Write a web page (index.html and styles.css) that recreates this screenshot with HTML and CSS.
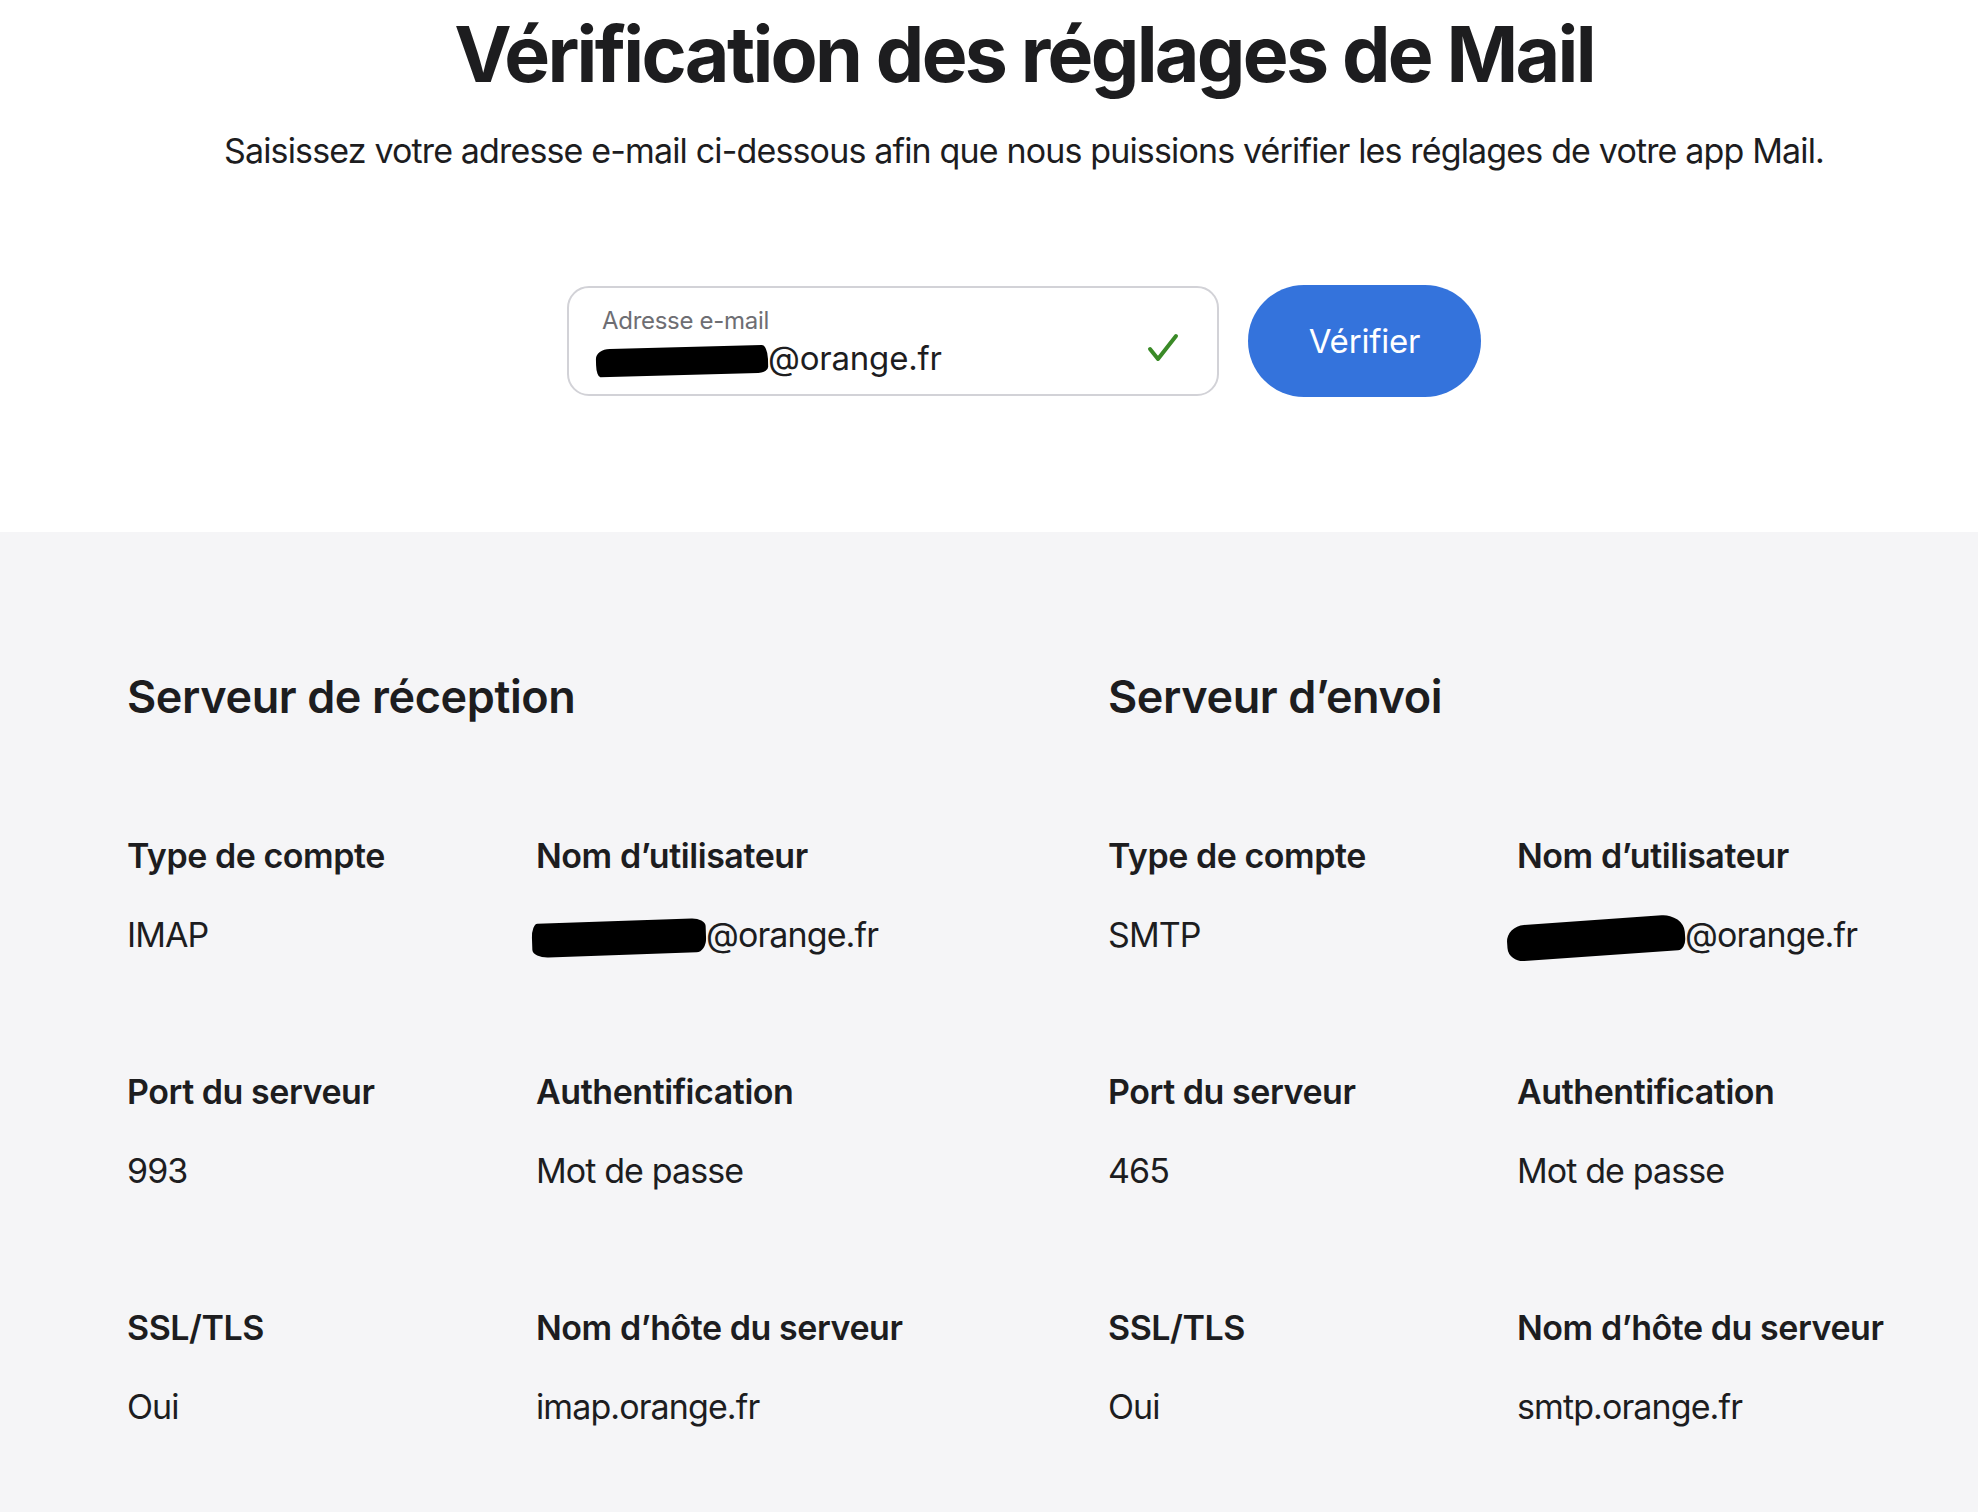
FILE: index.html
```html
<!DOCTYPE html>
<html lang="fr">
<head>
<meta charset="utf-8">
<title>Vérification des réglages de Mail</title>
<link rel="stylesheet" href="styles.css">
</head>
<body>
<header class="intro">
  <div class="wrap">
    <h1 class="title">Vérification des réglages de Mail</h1>
    <p class="lead">Saisissez votre adresse e-mail ci-dessous afin que nous puissions vérifier les réglages de votre app Mail.</p>
    <form class="form">
      <div class="field">
        <div class="field-text">
          <span class="field-label">Adresse e-mail</span>
          <span class="field-value"><span class="redact redact-input">utilisateur</span>@orange.fr</span>
        </div>
        <svg class="check" width="32" height="30" viewBox="0 0 32 30" aria-hidden="true">
          <polyline points="3,16 11,26 29,3" fill="none" stroke="#3a8a27" stroke-width="4" stroke-linecap="round" stroke-linejoin="round"/>
        </svg>
      </div>
      <button type="button" class="btn">Vérifier</button>
    </form>
  </div>
</header>

<main class="results">
  <div class="wrap">
    <div class="servers">
      <section class="server">
        <h2 class="server-title">Serveur de réception</h2>
        <dl class="grid">
          <div class="item"><dt>Type de compte</dt><dd>IMAP</dd></div>
          <div class="item"><dt>Nom d’utilisateur</dt><dd><span class="redact redact-a">utilisateur</span>@orange.fr</dd></div>
          <div class="item"><dt>Port du serveur</dt><dd>993</dd></div>
          <div class="item"><dt>Authentification</dt><dd>Mot de passe</dd></div>
          <div class="item"><dt>SSL/TLS</dt><dd>Oui</dd></div>
          <div class="item"><dt>Nom d’hôte du serveur</dt><dd>imap.orange.fr</dd></div>
        </dl>
      </section>
      <section class="server">
        <h2 class="server-title">Serveur d’envoi</h2>
        <dl class="grid">
          <div class="item"><dt>Type de compte</dt><dd>SMTP</dd></div>
          <div class="item"><dt>Nom d’utilisateur</dt><dd><span class="redact redact-b">utilisateur</span>@orange.fr</dd></div>
          <div class="item"><dt>Port du serveur</dt><dd>465</dd></div>
          <div class="item"><dt>Authentification</dt><dd>Mot de passe</dd></div>
          <div class="item"><dt>SSL/TLS</dt><dd>Oui</dd></div>
          <div class="item"><dt>Nom d’hôte du serveur</dt><dd>smtp.orange.fr</dd></div>
        </dl>
      </section>
    </div>
  </div>
</main>
</body>
</html>
```

FILE: styles.css
```css
* { box-sizing: border-box; }

html, body {
  margin: 0;
  padding: 0;
}

body {
  font-family: Inter, "Noto Sans", "Liberation Sans", sans-serif;
  color: #1d1d1f;
  background: #ffffff;
  min-height: 1512px;
  display: flex;
  flex-direction: column;
}

.wrap {
  padding: 0 57px 0 127px;
}

/* ---------- intro ---------- */
.intro {
  background: #ffffff;
  padding: 10px 0 135px;
}

.title {
  margin: 0;
  text-align: center;
  font-size: 77px;
  line-height: 88px;
  font-weight: 700;
  letter-spacing: -2.7px;
}

.lead {
  margin: 28px 0 0;
  text-align: center;
  font-size: 34px;
  line-height: 49px;
  font-weight: 400;
  letter-spacing: -0.85px;
}

.form {
  margin-top: 110px;
  display: flex;
  justify-content: center;
  align-items: center;
  gap: 29px;
}

.field {
  width: 652px;
  height: 110px;
  border: 2px solid #d2d2d7;
  border-radius: 22px;
  background: #fff;
  display: flex;
  align-items: flex-start;
  padding: 18px 38px 0 33px;
}

.field-text {
  flex: 1;
  display: flex;
  flex-direction: column;
  gap: 3px;
}

.field-label {
  font-size: 24px;
  line-height: 29px;
  color: #6e6e73;
  letter-spacing: -0.3px;
}

.field-value {
  font-size: 33px;
  line-height: 40px;
  color: #1d1d1f;
  letter-spacing: -0.2px;
}

.check {
  margin-top: 27px;
  flex: none;
}

.btn {
  width: 233px;
  height: 112px;
  border: 0;
  border-radius: 56px;
  background: #3473dc;
  color: #fff;
  font-family: inherit;
  font-size: 33px;
  font-weight: 400;
  letter-spacing: -0.2px;
  padding: 0;
}

/* ---------- redactions ---------- */
.redact {
  display: inline-block;
  background: #000;
  color: #000;
  vertical-align: middle;
  overflow: hidden;
  white-space: nowrap;
  font-size: 20px;
  line-height: 30px;
}

.redact-input {
  width: 172px;
  height: 28px;
  margin-left: -6px;
  border-radius: 14px 6px 10px 4px / 10px 14px 6px 12px;
  transform: rotate(-1.5deg);
}

.redact-a {
  width: 174px;
  height: 34px;
  margin-left: -4px;
  border-radius: 6px 14px 10px 16px / 14px 8px 14px 8px;
  transform: rotate(-2deg);
}

.redact-b {
  width: 178px;
  height: 36px;
  margin-left: -10px;
  border-radius: 18px 22px 8px 16px / 16px 18px 12px 14px;
  transform: rotate(-4deg);
}

/* ---------- results ---------- */
.results {
  flex: 1;
  background: #f5f5f7;
  padding: 138px 0 60px;
}

.servers {
  display: grid;
  grid-template-columns: 813px 813px;
  column-gap: 168px;
}

.server-title {
  margin: 0;
  font-size: 45px;
  line-height: 54px;
  font-weight: 600;
  letter-spacing: -0.4px;
}

.grid {
  margin: 111px 0 0;
  display: grid;
  grid-template-columns: 409px 1fr;
  row-gap: 115px;
}

.item dt {
  font-size: 34px;
  line-height: 42px;
  font-weight: 600;
  letter-spacing: -0.45px;
}

.item dd {
  margin: 37px 0 0;
  font-size: 34px;
  line-height: 42px;
  font-weight: 400;
  letter-spacing: -0.9px;
  white-space: nowrap;
}
```
